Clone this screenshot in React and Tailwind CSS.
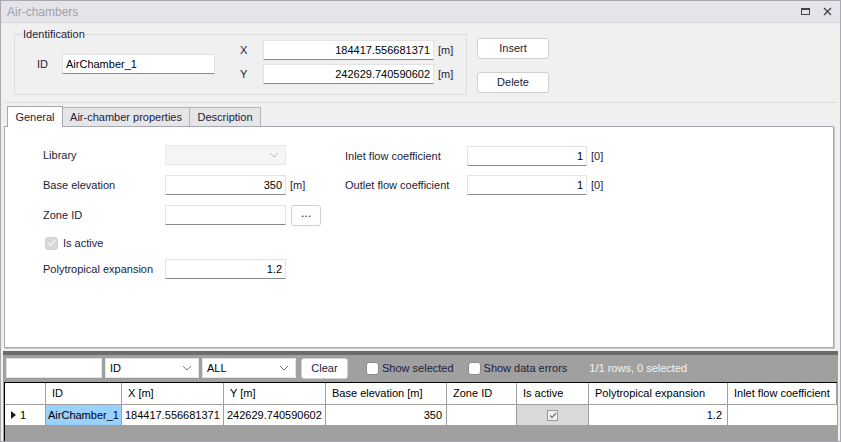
import React from "react";

/* ─── small form bits ─── */
const Input = ({ value = "", className = "", align = "right" }) => (
  <div
    className={`h-[20px] shrink-0 bg-white border border-[#e3e3e3] border-b-[#8a8a8a] flex items-center px-[3px] text-black whitespace-nowrap ${
      align === "right" ? "justify-end" : "justify-start"
    } ${className}`}
  >
    {value}
  </div>
);

const Btn = ({ children, className = "" }) => (
  <div
    className={`h-[21px] shrink-0 bg-white border border-[#cfcfcf] rounded-[3px] flex items-center justify-center text-[#1c1c3a] ${className}`}
  >
    {children}
  </div>
);

const Chevron = ({ color = "#7a7a7a" }) => (
  <svg width="10" height="6" viewBox="0 0 10 6" fill="none">
    <path d="M1 1l4 4 4-4" stroke={color} strokeWidth="1" />
  </svg>
);

const Combo = ({ value, className = "" }) => (
  <div className={`h-[20px] bg-white border border-[#e3e3e3] flex items-center justify-between pl-[4px] pr-[6px] text-black ${className}`}>
    <span>{value}</span>
    <Chevron />
  </div>
);

const CheckBox = ({ checked, disabled }) => (
  <div
    className={`w-[13px] h-[13px] shrink-0 rounded-[3px] border flex items-center justify-center ${
      disabled ? "bg-[#d8d8d8] border-[#d0d0d0]" : "bg-white border-[#8a8a8a]"
    }`}
  >
    {checked && (
      <svg width="9" height="8" viewBox="0 0 9 8" fill="none">
        <path d="M1 4l2.5 2.5L8 1" stroke="#f4f4f4" strokeWidth="1.4" />
      </svg>
    )}
  </div>
);

/* ─── grid columns ─── */
const cols = [
  { label: "", w: "w-[41px]" },
  { label: "ID", w: "w-[76px]" },
  { label: "X [m]", w: "w-[102px]" },
  { label: "Y [m]", w: "w-[102px]" },
  { label: "Base elevation [m]", w: "w-[121px]" },
  { label: "Zone ID", w: "w-[70px]" },
  { label: "Is active", w: "w-[72px]" },
  { label: "Polytropical expansion", w: "w-[139px]" },
  { label: "Inlet flow coefficient", w: "flex-1" },
];

export default function App() {
  return (
    <div
      className="w-[841px] h-[442px] bg-[#f0f0f0] border border-[#a8a8b0] flex flex-col overflow-hidden text-[11px] text-[#1c1c3a]"
      style={{ fontFamily: '"Liberation Sans", Arial, sans-serif' }}
    >
      {/* ── Title bar ── */}
      <div className="h-[22px] shrink-0 bg-[#e5e5e9] border-b border-[#d8d8dc] flex items-center justify-between pl-[6px] pr-[8px]">
        <span className="text-[#a0a0ac] text-[12px]">Air-chambers</span>
        <div className="flex items-center gap-[13px]">
          <div className="w-[9px] h-[7px] border border-[#44444c] border-t-2" />
          <svg width="9" height="9" viewBox="0 0 9 9">
            <path d="M1 1l7 7M8 1l-7 7" stroke="#44444c" strokeWidth="1.4" />
          </svg>
        </div>
      </div>

      {/* ── Identification ── */}
      <div className="h-[79px] shrink-0 flex items-start pt-[4px]">
        <fieldset className="ml-[13px] w-[453px] h-[68px] border border-[#dcdcdc] pl-[7px] flex items-start">
          <legend className="px-[1px] leading-[14px] text-[#1c1c3a]">Identification</legend>
          <div className="flex items-center w-[218px] pl-[15px] mt-[13px]">
            <span className="w-[25px]">ID</span>
            <Input value="AirChamber_1" align="left" className="w-[153px]" />
          </div>
          <div className="flex flex-col gap-[4px] mt-[-1px]">
            <div className="flex items-center">
              <span className="w-[23px]">X</span>
              <Input value="184417.556681371" className="w-[171px]" />
              <span className="ml-[4px]">[m]</span>
            </div>
            <div className="flex items-center">
              <span className="w-[23px]">Y</span>
              <Input value="242629.740590602" className="w-[171px]" />
              <span className="ml-[4px]">[m]</span>
            </div>
          </div>
        </fieldset>
        <div className="ml-[10px] mt-[11px] flex flex-col gap-[13px]">
          <Btn className="w-[72px]">Insert</Btn>
          <Btn className="w-[72px]">Delete</Btn>
        </div>
      </div>

      <div className="mx-[3px] h-px bg-[#dcdcdc]" />

      {/* ── Tabs ── */}
      <div className="flex items-end ml-[6px] mt-[2px] h-[21px] shrink-0">
        <div className="h-[21px] w-[56px] bg-white border border-[#a8a8b0] border-b-0 flex items-center justify-center relative z-10 mb-[-1px]">
          General
        </div>
        <div className="h-[19px] w-[127px] bg-[#e6e6e9] border border-[#b4b4ba] border-b-0 border-l-0 flex items-center justify-center">
          Air-chamber properties
        </div>
        <div className="h-[19px] w-[71px] bg-[#e6e6e9] border border-[#b4b4ba] border-b-0 border-l-0 flex items-center justify-center">
          Description
        </div>
      </div>

      {/* ── Tab panel ── */}
      <div className="ml-[3px] mr-[6px] h-[222px] shrink-0 bg-white border border-[#a8a8b0] shadow-[1px_1px_0_#c8c8cc] flex pt-[18px]">
        <div className="w-[299px] pl-[38px] flex flex-col">
          <div className="flex items-center h-[20px]">
            <span className="w-[122px] shrink-0">Library</span>
            <div className="w-[121px] h-[20px] bg-[#f5f5f5] border border-[#e8e8e8] flex items-center justify-end pr-[6px]">
              <Chevron color="#bdbdbd" />
            </div>
          </div>
          <div className="flex items-center h-[20px] mt-[10px]">
            <span className="w-[122px] shrink-0">Base elevation</span>
            <Input value="350" className="w-[121px]" />
            <span className="ml-[4px]">[m]</span>
          </div>
          <div className="flex items-center h-[20px] mt-[10px]">
            <span className="w-[122px] shrink-0">Zone ID</span>
            <Input className="w-[121px]" />
            <Btn className="w-[30px] ml-[5px] h-[21px] border-[#c8c8c8] pb-[4px] text-[12px]">...</Btn>
          </div>
          <div className="flex items-center h-[18px] mt-[9px] pl-[2px] gap-[5px] text-[#1c1c3a]">
            <CheckBox checked disabled />
            <span>Is active</span>
          </div>
          <div className="flex items-center h-[20px] mt-[7px]">
            <span className="w-[122px] shrink-0">Polytropical expansion</span>
            <Input value="1.2" className="w-[121px]" />
          </div>
        </div>
        <div className="pl-[41px] flex flex-col pt-[1px]">
          <div className="flex items-center h-[20px]">
            <span className="w-[122px] shrink-0">Inlet flow coefficient</span>
            <Input value="1" className="w-[120px]" />
            <span className="ml-[4px]">[0]</span>
          </div>
          <div className="flex items-center h-[20px] mt-[9px]">
            <span className="w-[122px] shrink-0">Outlet flow coefficient</span>
            <Input value="1" className="w-[120px]" />
            <span className="ml-[4px]">[0]</span>
          </div>
        </div>
      </div>

      {/* ── Grid area ── */}
      <div className="mt-[3px] ml-[2px] mr-[2px] flex-1 bg-[#a0a0a0] border-t-[4px] border-[#6b6b6b] flex flex-col">
        <div className="h-[26px] flex items-center px-[3px] gap-[3px]">
          <div className="w-[96px] h-[20px] bg-white border border-[#e3e3e3]" />
          <Combo value="ID" className="w-[94px]" />
          <Combo value="ALL" className="w-[94px]" />
          <Btn className="w-[47px] ml-[2px] h-[21px] bg-[#f7f7f7]">Clear</Btn>
          <div className="flex items-center gap-[3px] ml-[15px]">
            <CheckBox />
            <span className="text-[#1c1c3a]">Show selected</span>
          </div>
          <div className="flex items-center gap-[3px] ml-[11px]">
            <CheckBox />
            <span className="text-[#1c1c3a]">Show data errors</span>
          </div>
          <span className="ml-[19px] text-[#f4f4f4]">1/1 rows, 0 selected</span>
        </div>
        <div className="mx-[1px] mt-[1px] border border-black border-b-0 border-r-0 bg-[#a0a0a0] flex-1 flex flex-col">
          <div className="h-[22px] flex bg-white border-b border-[#a0a0a0]">
            {cols.map((c, i) => (
              <div key={i} className={`${c.w} shrink-0 border-r border-[#a0a0a0] flex items-center pl-[6px] text-black whitespace-nowrap overflow-hidden`}>
                {c.label}
              </div>
            ))}
          </div>
          <div className="h-[21px] flex bg-white border-b border-[#a0a0a0] text-black whitespace-nowrap">
            <div className="w-[41px] shrink-0 border-r border-[#a0a0a0] flex items-center pl-[6px] gap-[4px]">
              <svg width="5" height="8" viewBox="0 0 5 8"><path d="M0 0l5 4-5 4z" fill="#1a1a1a" /></svg>
              <span>1</span>
            </div>
            <div className="w-[76px] shrink-0 border-r border-[#a0a0a0] bg-[#99d1ff] flex items-center pl-[2px]">AirChamber_1</div>
            <div className="w-[102px] shrink-0 border-r border-[#a0a0a0] flex items-center pl-[3px]">184417.556681371</div>
            <div className="w-[102px] shrink-0 border-r border-[#a0a0a0] flex items-center pl-[3px]">242629.740590602</div>
            <div className="w-[121px] shrink-0 border-r border-[#a0a0a0] flex items-center justify-end pr-[4px]">350</div>
            <div className="w-[70px] shrink-0 border-r border-[#a0a0a0]" />
            <div className="w-[72px] shrink-0 border-r border-[#a0a0a0] bg-[#d9d9d9] flex items-center justify-center">
              <div className="w-[11px] h-[11px] border border-[#9a9a9a] bg-[#f0f0f0] flex items-center justify-center">
                <svg width="8" height="7" viewBox="0 0 8 7" fill="none">
                  <path d="M1 3.5l2 2L7 1" stroke="#7a7a7a" strokeWidth="1.3" />
                </svg>
              </div>
            </div>
            <div className="w-[139px] shrink-0 border-r border-[#a0a0a0] flex items-center justify-end pr-[5px]">1.2</div>
            <div className="flex-1" />
          </div>
        </div>
      </div>
    </div>
  );
}
